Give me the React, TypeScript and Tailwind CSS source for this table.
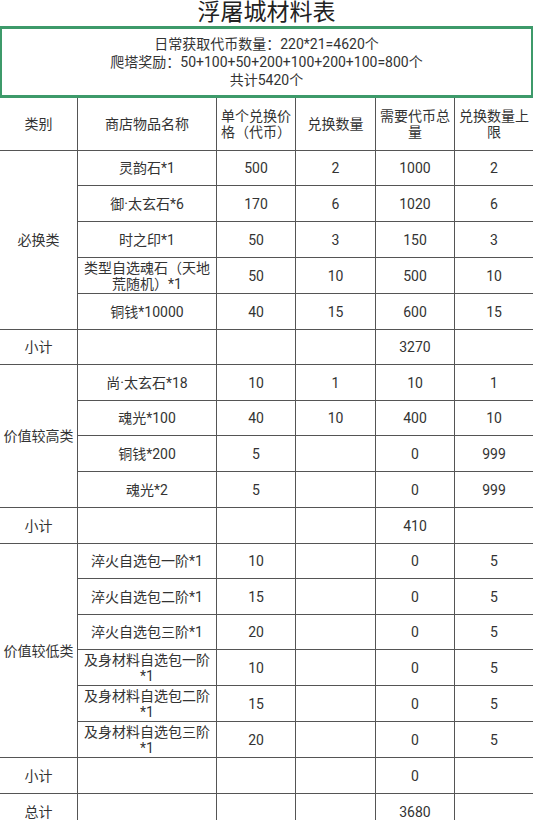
import { Fragment } from "react";

const font = { fontFamily: 'Roboto, "Noto Sans CJK SC", sans-serif' };

type Row = { name: string; price: string; qty: string; total: string; limit: string };

const groups: { label: string; rows: Row[]; subtotal: string }[] = [
  {
    label: "必换类",
    rows: [
      { name: "灵韵石*1", price: "500", qty: "2", total: "1000", limit: "2" },
      { name: "御·太玄石*6", price: "170", qty: "6", total: "1020", limit: "6" },
      { name: "时之印*1", price: "50", qty: "3", total: "150", limit: "3" },
      { name: "类型自选魂石（天地荒随机）*1", price: "50", qty: "10", total: "500", limit: "10" },
      { name: "铜钱*10000", price: "40", qty: "15", total: "600", limit: "15" },
    ],
    subtotal: "3270",
  },
  {
    label: "价值较高类",
    rows: [
      { name: "尚·太玄石*18", price: "10", qty: "1", total: "10", limit: "1" },
      { name: "魂光*100", price: "40", qty: "10", total: "400", limit: "10" },
      { name: "铜钱*200", price: "5", qty: "", total: "0", limit: "999" },
      { name: "魂光*2", price: "5", qty: "", total: "0", limit: "999" },
    ],
    subtotal: "410",
  },
  {
    label: "价值较低类",
    rows: [
      { name: "淬火自选包一阶*1", price: "10", qty: "", total: "0", limit: "5" },
      { name: "淬火自选包二阶*1", price: "15", qty: "", total: "0", limit: "5" },
      { name: "淬火自选包三阶*1", price: "20", qty: "", total: "0", limit: "5" },
      { name: "及身材料自选包一阶*1", price: "10", qty: "", total: "0", limit: "5" },
      { name: "及身材料自选包二阶*1", price: "15", qty: "", total: "0", limit: "5" },
      { name: "及身材料自选包三阶*1", price: "20", qty: "", total: "0", limit: "5" },
    ],
    subtotal: "0",
  },
];

// rowspan for each category label
const spans = ["row-span-5", "row-span-4", "row-span-6"];

function Cell({ children, className = "" }: { children?: React.ReactNode; className?: string }) {
  return (
    <div className={`bg-white flex items-center justify-center text-center px-[2px] leading-[16px] ${className}`}>
      {children}
    </div>
  );
}

export default function App() {
  return (
    <div className="w-[533px] h-[820px] overflow-hidden bg-white text-[#333]" style={font}>
      <div className="h-[26px] text-center text-[23px] leading-[26px] text-[#222]">浮屠城材料表</div>

      <div className="h-[72px] border-[#3d9a6a] border-t-[3px] border-b-[3px] border-x-2 flex flex-col items-center justify-center text-[14px] leading-[18px]">
        <div>日常获取代币数量：220*21=4620个</div>
        <div>爬塔奖励：50+100+50+200+100+200+100=800个</div>
        <div>共计5420个</div>
      </div>

      <div className="grid grid-cols-[77px_138px_78px_79px_78px_78px] grid-rows-[52px_34px_35px_35px_35px_35px_34px_35px_34px_35px_35px_35px_34px_35px_34px_35px_35px_35px_35px_35px] gap-px bg-[#555] text-[14px]">
        <Cell>类别</Cell>
        <Cell>商店物品名称</Cell>
        <Cell>单个兑换价格（代币）</Cell>
        <Cell>兑换数量</Cell>
        <Cell>需要代币总量</Cell>
        <Cell>兑换数量上限</Cell>

        {groups.map((g, gi) => (
          <Fragment key={g.label}>
            {g.rows.map((r, ri) => (
              <Fragment key={r.name}>
                {ri === 0 && <Cell className={spans[gi]}>{g.label}</Cell>}
                <Cell>{r.name}</Cell>
                <Cell>{r.price}</Cell>
                <Cell>{r.qty}</Cell>
                <Cell>{r.total}</Cell>
                <Cell>{r.limit}</Cell>
              </Fragment>
            ))}
            <Cell>小计</Cell>
            <Cell />
            <Cell />
            <Cell />
            <Cell>{g.subtotal}</Cell>
            <Cell />
          </Fragment>
        ))}

        <Cell>总计</Cell>
        <Cell />
        <Cell />
        <Cell />
        <Cell>3680</Cell>
        <Cell />
      </div>
    </div>
  );
}
